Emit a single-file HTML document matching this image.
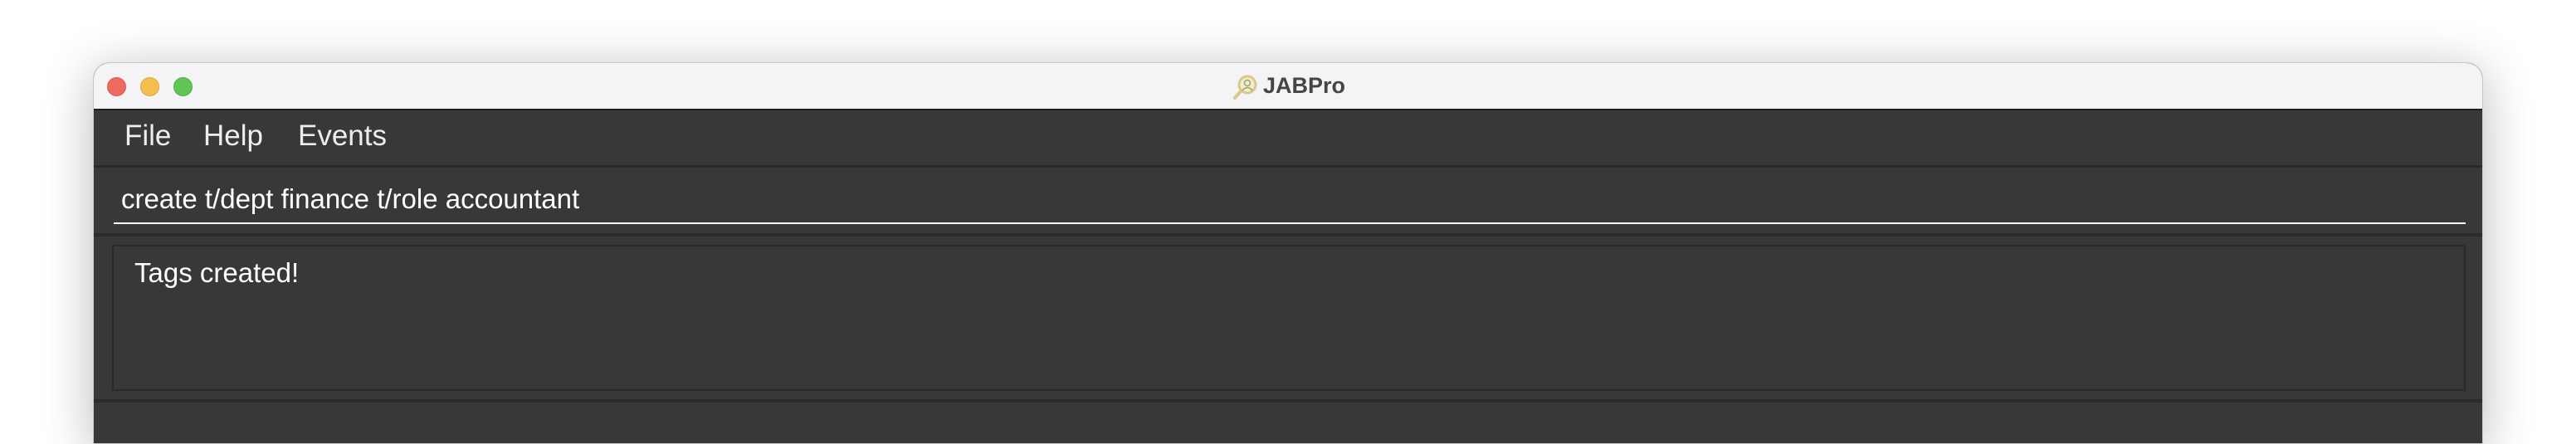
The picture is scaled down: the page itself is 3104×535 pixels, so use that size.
<!DOCTYPE html>
<html><head><meta charset="utf-8"><style>
*{margin:0;padding:0;box-sizing:border-box}
body{width:3104px;height:524px;background:#fff;position:relative;overflow:hidden;font-family:"Liberation Sans",sans-serif}
.win{position:absolute;left:112px;top:75px;width:2880px;height:460px;border-radius:20px 20px 0 0;overflow:hidden;box-shadow:0 10px 60px rgba(0,0,0,.28);border:1px solid #c8c8c8;background:#383838}
.title{position:absolute;left:0;top:0;right:0;height:57px;background:#f4f3f6;border-bottom:2px solid #1e1e1e}
.dot{position:absolute;top:17px;width:23px;height:23px;border-radius:50%}
.abs{position:absolute}
.t{color:#ededed;position:absolute;white-space:nowrap}
</style></head><body>
<div class="win">
 <div class="title">
  <div class="dot" style="left:16px;background:#ed6a5e;border:1px solid #d85a4f"></div>
  <div class="dot" style="left:56px;background:#f5bf4f;border:1px solid #dea63d"></div>
  <div class="dot" style="left:96px;background:#61c554;border:1px solid #50ad43"></div>
  <svg class="abs" style="left:1372px;top:13px" width="32" height="32" viewBox="0 0 32 32"><line x1="10" y1="21" x2="3" y2="29" stroke="#d8c88a" stroke-width="4" stroke-linecap="round"/><circle cx="18" cy="13" r="10" fill="#eef0cc" stroke="#d8c88a" stroke-width="3"/><circle cx="18" cy="11" r="3.5" fill="none" stroke="#9aa070" stroke-width="1.5"/><path d="M12 20 q6-7 12 0" fill="none" stroke="#9aa070" stroke-width="1.5"/></svg>
  <div class="abs" style="left:1409px;top:12px;font-size:27px;font-weight:bold;color:#454545">JABPro</div>
 </div>
 <div class="t" style="left:37px;top:68px;font-size:35px">File</div>
 <div class="t" style="left:132px;top:68px;font-size:35px">Help</div>
 <div class="t" style="left:246px;top:68px;font-size:35px">Events</div>
 <div class="abs" style="left:0;right:0;top:123px;height:3px;background:#2a2a2a"></div>
 <div class="t" style="left:33px;top:145px;font-size:33px;color:#fff">create t/dept finance t/role accountant</div>
 <div class="abs" style="left:24px;top:192px;width:2834px;height:2px;background:#fff"></div>
 <div class="abs" style="left:0;right:0;top:205px;height:4px;background:#2a2a2a"></div>
 <div class="abs" style="left:22px;top:219px;width:2836px;height:176px;border:2px solid #2a2a2a"></div>
 <div class="t" style="left:49px;top:234px;font-size:33px;color:#fff">Tags created!</div>
 <div class="abs" style="left:0;right:0;top:405px;height:4px;background:#2a2a2a"></div>
</div>
</body></html>
